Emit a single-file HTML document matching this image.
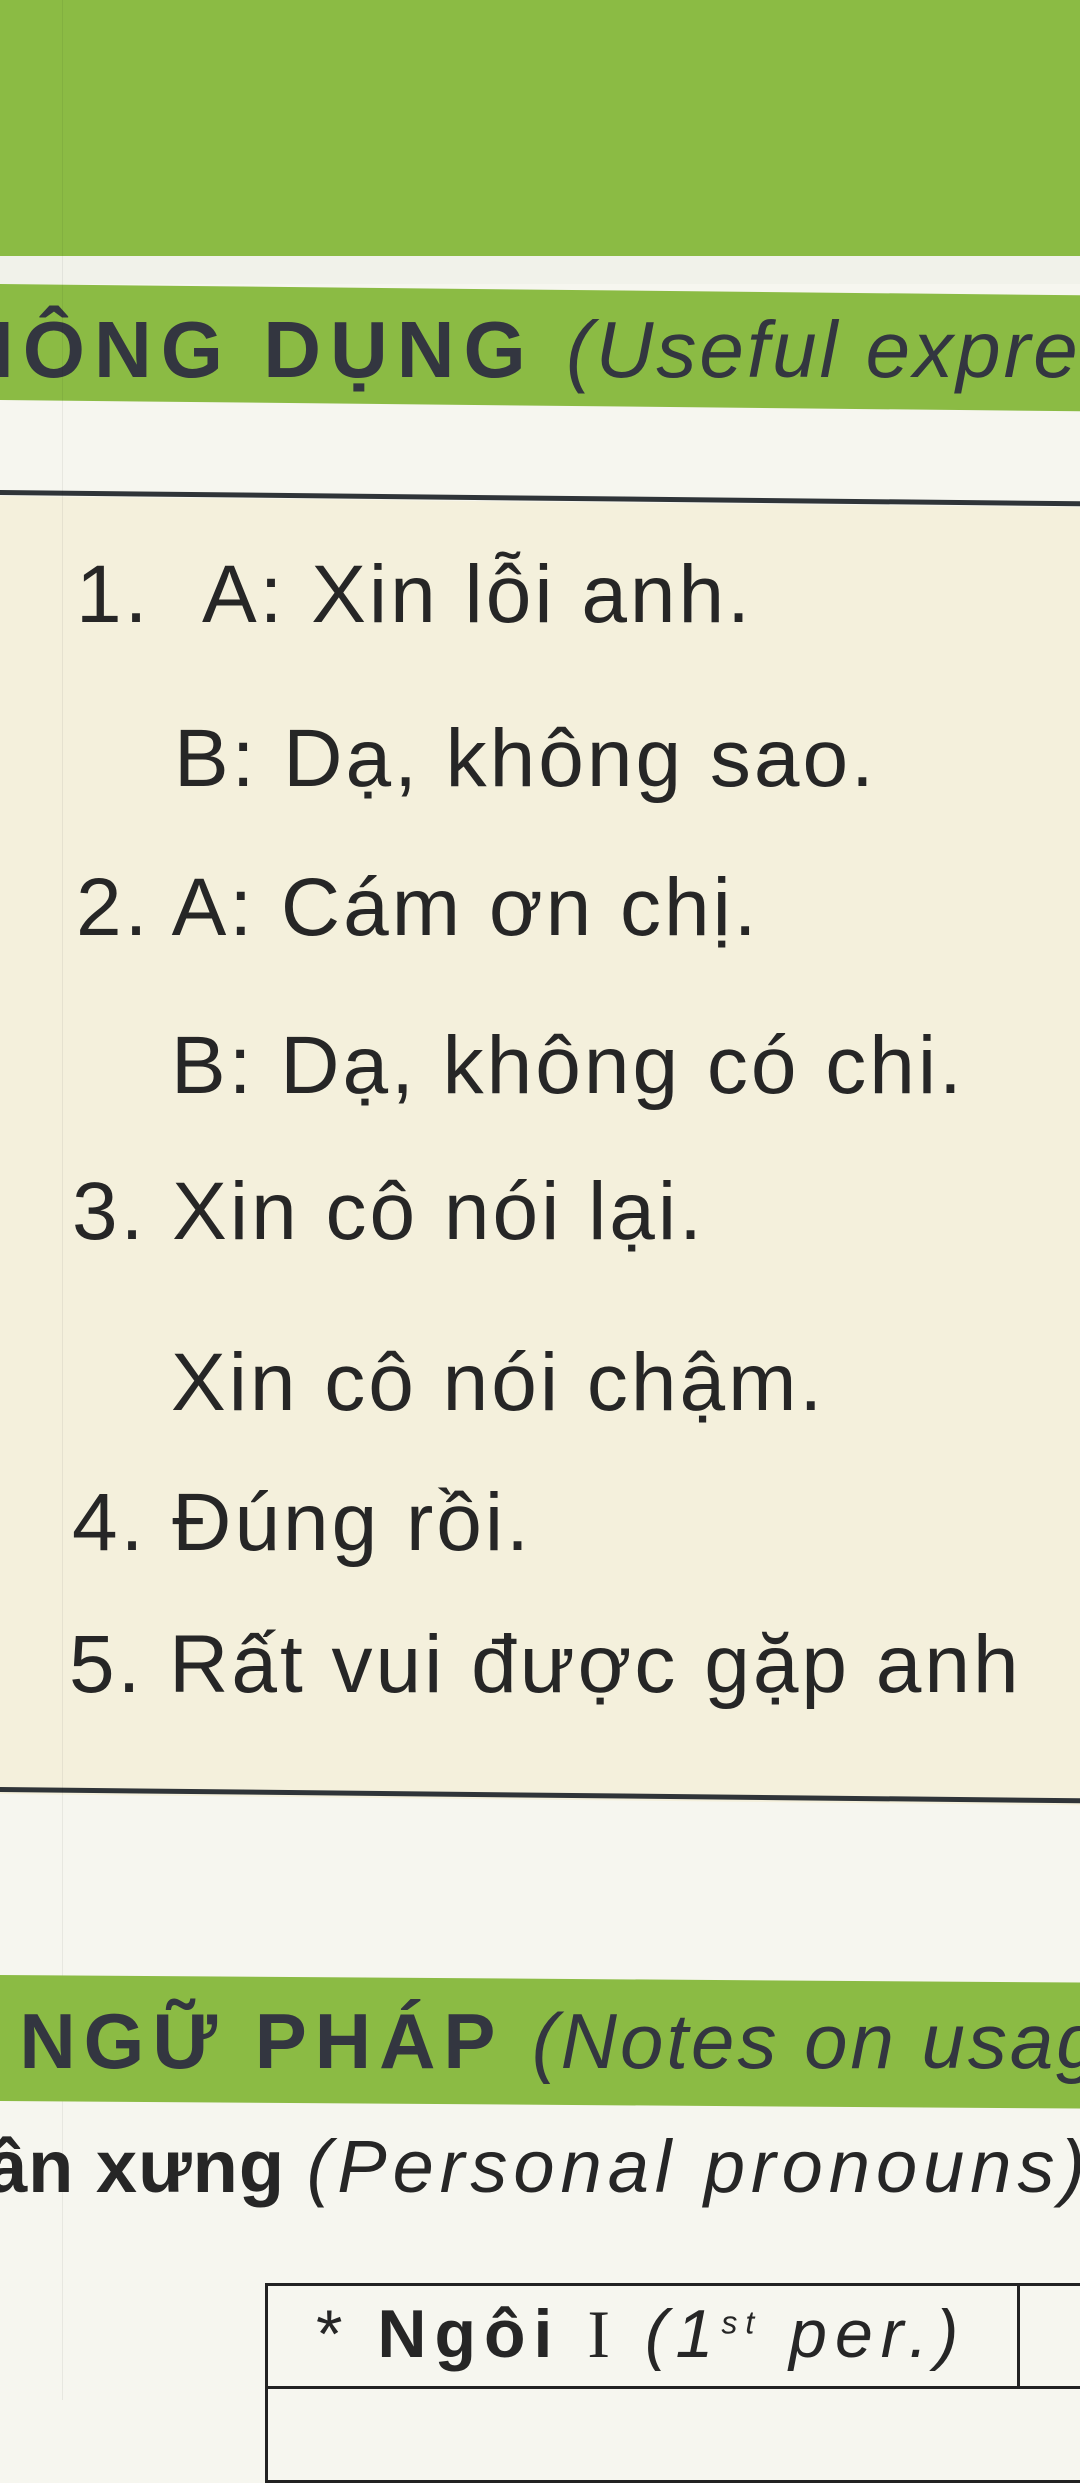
<!DOCTYPE html>
<html><head><meta charset="utf-8"><style>
html,body{margin:0;padding:0}
body{width:1080px;height:2400px;position:relative;overflow:hidden;background:#f6f6ef;font-family:"Liberation Sans",sans-serif;color:#262626}
.t{position:absolute;white-space:nowrap;line-height:1;font-size:82px;letter-spacing:3px}
.g{position:absolute;background:#8bbb44}
</style></head><body>
<div class="g" style="left:0;top:0;width:1080px;height:256px"></div>
<div style="position:absolute;left:0;top:256px;width:1080px;height:28px;background:#f1f2ea"></div>
<div class="g" style="left:0;top:284px;width:1080px;height:116px;transform:skewY(0.6deg);transform-origin:0 0"></div>
<div class="t" style="left:-44px;top:310px;font-size:80px;font-weight:bold;color:#333640;letter-spacing:9px">HÔNG DỤNG <span style="font-weight:normal;font-style:italic;letter-spacing:3px">(Useful expressions)</span></div>
<div style="position:absolute;left:0;top:496px;width:1080px;height:1298px;background:#f4f0dc;transform:skewY(0.6deg);transform-origin:0 0"></div>
<div style="position:absolute;left:0;top:490px;width:1080px;height:5px;background:#2f3438;transform:skewY(0.6deg);transform-origin:0 0"></div>
<div style="position:absolute;left:0;top:1787px;width:1080px;height:5px;background:#2f3438;transform:skewY(0.6deg);transform-origin:0 0"></div>
<div style="position:absolute;left:62px;top:0;width:1px;height:2400px;background:rgba(0,0,0,0.06)"></div>
<div class="t" style="left:76px;top:554px">1.&nbsp;&nbsp;A: Xin lỗi anh.</div>
<div class="t" style="left:174px;top:718px">B: Dạ, không sao.</div>
<div class="t" style="left:76px;top:867px">2. A: Cám ơn chị.</div>
<div class="t" style="left:171px;top:1025px">B: Dạ, không có chi.</div>
<div class="t" style="left:72px;top:1171px">3. Xin cô nói lại.</div>
<div class="t" style="left:171px;top:1342px">Xin cô nói chậm.</div>
<div class="t" style="left:72px;top:1482px">4. Đúng rồi.</div>
<div class="t" style="left:69px;top:1624px">5. Rất vui được gặp anh</div>
<div class="g" style="left:0;top:1975px;width:1080px;height:126px;transform:skewY(0.4deg);transform-origin:0 0"></div>
<div class="t" style="left:-40px;top:2002px;font-size:78px;font-weight:bold;color:#333640;letter-spacing:8px">I NGỮ PHÁP <span style="font-weight:normal;font-style:italic;letter-spacing:3px">(Notes on usage)</span></div>
<div class="t" style="left:-14px;top:2130px;font-size:74px;letter-spacing:1px"><b>ần xưng</b> <i style="letter-spacing:6px">(Personal pronouns)</i></div>
<div style="position:absolute;left:265px;top:2283px;width:1000px;height:200px;border:3px solid #222;box-sizing:border-box"></div>
<div style="position:absolute;left:1017px;top:2283px;width:3px;height:106px;background:#222"></div>
<div style="position:absolute;left:265px;top:2386px;width:900px;height:3px;background:#222"></div>
<div class="t" style="left:316px;top:2300px;font-size:68px;letter-spacing:8px">* <b>Ngôi</b> <span style="font-family:'Liberation Serif',serif">I</span> <i>(1<sup style="font-size:32px">st</sup> per.)</i></div>
</body></html>
